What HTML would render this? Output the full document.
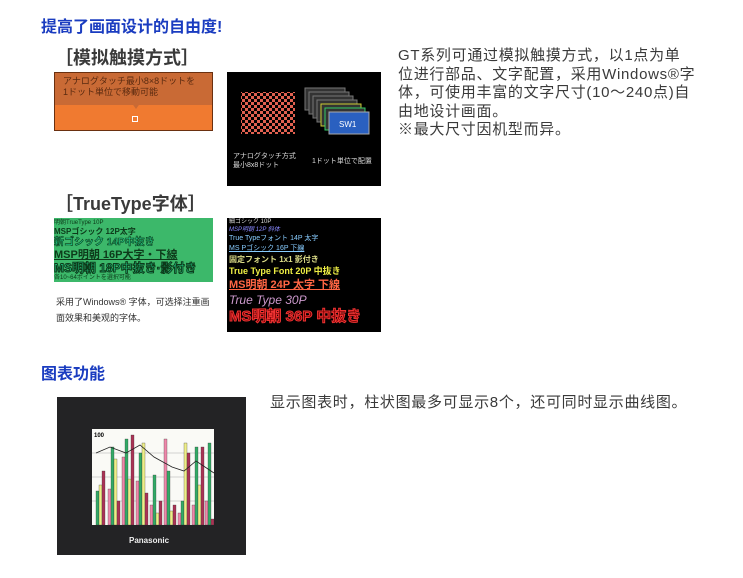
<!DOCTYPE html>
<html><head><meta charset="utf-8"><style>
body{margin:0;width:743px;height:578px;background:#fff;position:relative;overflow:hidden;font-family:"Liberation Sans","Noto Sans CJK SC",sans-serif}
.a{position:absolute}
.h{color:#1a3cc0;font-weight:bold;font-size:16px;line-height:18px}
.sub{color:#3a3a3a;font-weight:bold;font-size:18px;line-height:20px}
.p{color:#3a3a3a;font-size:15px;line-height:18.5px;white-space:nowrap;letter-spacing:0.7px}
.jp{font-family:"Liberation Sans","Noto Sans CJK JP",sans-serif}
</style></head><body>
<div class="a h" style="left:41px;top:19px">提高了画面设计的自由度!</div>
<div class="a sub" style="left:55px;top:48px">［模拟触摸方式］</div>
<div class="a" style="left:54px;top:72px;width:159px;height:59px;background:#f07a30;border:1px solid #6a3010;box-sizing:border-box">
 <div class="jp" style="height:29px;background:#c96a35;color:#5a2a10;font-size:9px;line-height:11px;padding:3px 0 0 8px">アナログタッチ最小8×8ドットを<br>1ドット単位で移動可能</div>
 <div style="position:absolute;left:76px;top:29px;width:0;height:0;border-left:5px solid transparent;border-right:5px solid transparent;border-top:7px solid #c96a35"></div>
 <div style="position:absolute;left:77px;top:43px;width:4px;height:4px;border:1px solid #fff"></div>
</div>
<div class="a" style="left:227px;top:72px;width:154px;height:114px;background:#000">
 <svg width="154" height="114" style="position:absolute;left:0;top:0">
  <defs><pattern id="ck" width="6" height="6" patternUnits="userSpaceOnUse"><rect width="3" height="3" fill="#e06050"/><rect x="3" y="3" width="3" height="3" fill="#e06050"/></pattern></defs>
  <rect x="14" y="20" width="54" height="42" fill="url(#ck)"/>
  <g fill="#333" stroke="#777"><rect x="78" y="16" width="40" height="22"/><rect x="82" y="20" width="40" height="22"/><rect x="86" y="24" width="40" height="22"/><rect x="90" y="28" width="40" height="22"/></g>
  <rect x="94" y="32" width="40" height="22" fill="#333" stroke="#cc3"/>
  <rect x="98" y="36" width="40" height="22" fill="#333" stroke="#3c6"/>
  <rect x="102" y="40" width="40" height="22" fill="#2a60c0" stroke="#aaa"/>
  <text x="112" y="55" font-size="8" fill="#fff">SW1</text>
 </svg>
 <div class="jp" style="position:absolute;left:6px;top:80px;color:#ddd;font-size:7px;line-height:9px">アナログタッチ方式<br>最小8x8ドット</div>
 <div class="jp" style="position:absolute;left:85px;top:84px;color:#ddd;font-size:7px">1ドット単位で配置</div>
</div>
<div class="a sub" style="left:55px;top:194px">［TrueType字体］</div>
<div class="a jp" style="left:54px;top:218px;width:159px;height:64px;background:#3cb86a;color:#0d3a1a;font-weight:bold;white-space:nowrap;overflow:hidden;padding-top:1px;box-sizing:border-box">
 <div style="font-size:6px;line-height:8px;font-weight:normal">明朝TrueType 10P</div>
 <div style="font-size:8px;line-height:10px">MSPゴシック 12P太字</div>
 <div style="font-size:10px;line-height:12px;color:#2c8;-webkit-text-stroke:.6px #0d3a1a">新ゴシック 14P中抜き</div>
 <div style="font-size:11px;line-height:13px;text-decoration:underline">MSP明朝 16P大字・下線</div>
 <div style="font-size:12px;line-height:13px;color:#2c8;-webkit-text-stroke:1px #0d3a1a">MS明朝 18P中抜き·影付き</div>
 <div style="font-size:6px;line-height:7px;font-weight:normal">各10~64ポイントを選択可能</div>
</div>
<div class="a" style="left:56px;top:294px;color:#333;font-size:9px;line-height:16px">采用了Windows® 字体，可选择注重画<br>面效果和美观的字体。</div>
<div class="a jp" style="left:227px;top:218px;width:154px;height:114px;background:#000;white-space:nowrap;overflow:hidden;padding-left:2px;box-sizing:border-box">
 <div style="font-size:6px;line-height:8px;color:#ddd">細ゴシック 10P</div>
 <div style="font-size:6px;line-height:8px;color:#88f;font-style:italic">MSP明朝 12P 斜体</div>
 <div style="font-size:7px;line-height:10px;color:#8cf">True Typeフォント 14P 太字</div>
 <div style="font-size:7px;line-height:10px;color:#8cf;text-decoration:underline">MS Pゴシック 16P 下線</div>
 <div style="font-size:8px;line-height:11px;color:#dd8;font-weight:bold">固定フォント 1x1 影付き</div>
 <div style="font-size:9px;line-height:13px;color:#ee4;font-weight:bold">True Type Font 20P 中抜き</div>
 <div style="font-size:11px;line-height:15px;color:#f64;text-decoration:underline;font-weight:bold">MS明朝 24P 太字 下線</div>
 <div style="font-size:12px;line-height:15px;color:#c9c;font-style:italic">True Type 30P</div>
 <div style="font-size:15px;line-height:17px;color:#700;font-weight:bold;-webkit-text-stroke:1px #e33">MS明朝 36P 中抜き</div>
</div>
<div class="a p" style="left:398px;top:47px">GT系列可通过模拟触摸方式，以1点为单<br>位进行部品、文字配置，采用Windows®字<br>体，可使用丰富的文字尺寸(10～240点)自<br>由地设计画面。<br>※最大尺寸因机型而异。</div>
<div class="a h" style="left:41px;top:366px">图表功能</div>
<div class="a" style="left:57px;top:397px;width:189px;height:158px;background:#232325">
 <svg style="position:absolute;left:35px;top:32px" width="122" height="96" viewBox="0 0 122 96">
  <rect width="122" height="96" fill="#fafaf6"/>
  <g stroke="#aaa" stroke-width=".5"><line x1="0" y1="24" x2="122" y2="24"/><line x1="0" y1="48" x2="122" y2="48"/><line x1="0" y1="72" x2="122" y2="72"/></g>
  <text x="2" y="8" font-size="6" font-weight="bold">100</text>
  <g stroke="#333" stroke-width=".3">
   <rect x="4" y="62" width="3" height="34" fill="#3a6"/><rect x="7" y="56" width="3" height="40" fill="#ee8"/><rect x="10" y="42" width="3" height="54" fill="#a35"/>
   <rect x="16" y="60" width="3" height="36" fill="#e8a"/><rect x="19" y="18" width="3" height="78" fill="#3a6"/><rect x="22" y="30" width="3" height="66" fill="#ee8"/><rect x="25" y="72" width="3" height="24" fill="#a35"/>
   <rect x="30" y="28" width="3" height="68" fill="#e8a"/><rect x="33" y="10" width="3" height="86" fill="#3a6"/><rect x="36" y="50" width="3" height="46" fill="#ee8"/><rect x="39" y="6" width="3" height="90" fill="#a35"/>
   <rect x="44" y="52" width="3" height="44" fill="#e8a"/><rect x="47" y="24" width="3" height="72" fill="#3a6"/><rect x="50" y="14" width="3" height="82" fill="#ee8"/><rect x="53" y="64" width="3" height="32" fill="#a35"/>
   <rect x="58" y="76" width="3" height="20" fill="#e8a"/><rect x="61" y="46" width="3" height="50" fill="#3a6"/><rect x="64" y="84" width="3" height="12" fill="#ee8"/><rect x="67" y="72" width="3" height="24" fill="#a35"/>
   <rect x="72" y="10" width="3" height="86" fill="#e8a"/><rect x="75" y="42" width="3" height="54" fill="#3a6"/><rect x="78" y="82" width="3" height="14" fill="#ee8"/><rect x="81" y="76" width="3" height="20" fill="#a35"/>
   <rect x="86" y="84" width="3" height="12" fill="#e8a"/><rect x="89" y="72" width="3" height="24" fill="#3a6"/><rect x="92" y="14" width="3" height="82" fill="#ee8"/><rect x="95" y="24" width="3" height="72" fill="#a35"/>
   <rect x="100" y="76" width="3" height="20" fill="#e8a"/><rect x="103" y="18" width="3" height="78" fill="#3a6"/><rect x="106" y="56" width="3" height="40" fill="#ee8"/><rect x="109" y="18" width="3" height="78" fill="#a35"/>
   <rect x="113" y="72" width="3" height="24" fill="#e8a"/><rect x="116" y="14" width="3" height="82" fill="#3a6"/><rect x="119" y="90" width="3" height="6" fill="#a35"/>
  </g>
  <polyline points="4,24 18,18 34,24 48,16 62,28 80,38 92,42 104,32 116,40 122,44" fill="none" stroke="#222" stroke-width=".8"/>
 </svg>
 <div style="position:absolute;left:72px;top:139px;color:#eee;font-size:8px;font-weight:bold">Panasonic</div>
</div>
<div class="a p" style="left:270px;top:394px">显示图表时，柱状图最多可显示8个，还可同时显示曲线图。</div>
</body></html>
